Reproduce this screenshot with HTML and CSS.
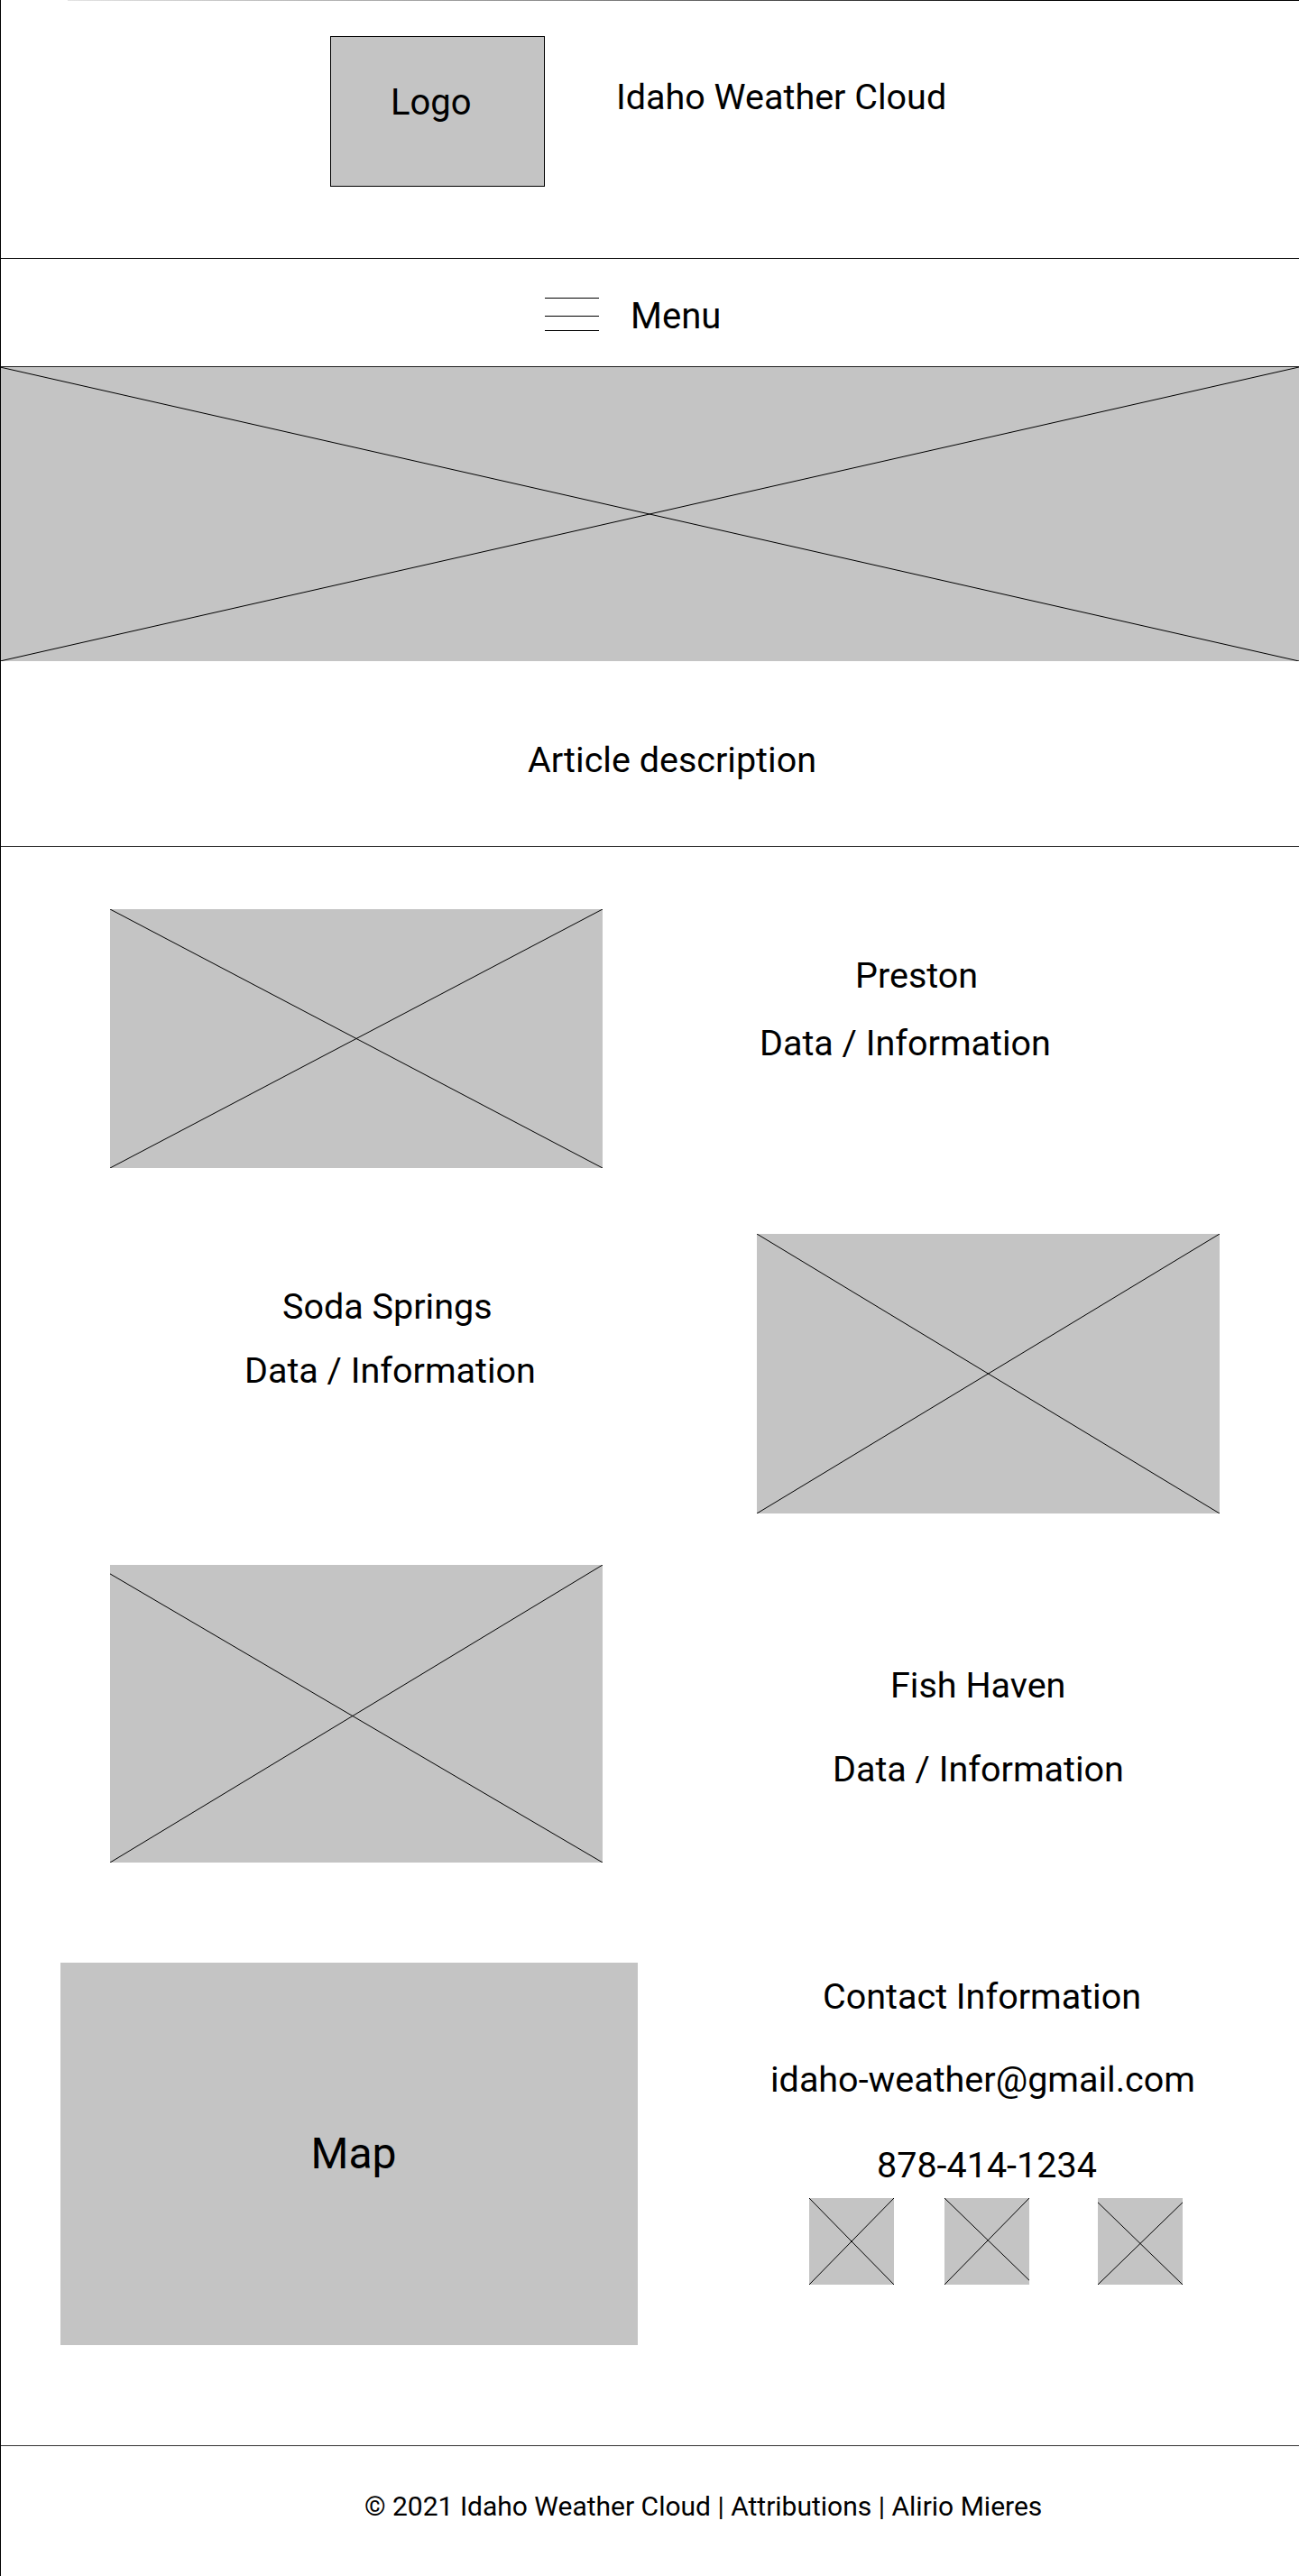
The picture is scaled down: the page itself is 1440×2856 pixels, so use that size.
FILE: index.html
```html
<!DOCTYPE html>
<html lang="en">
<head>
<meta charset="utf-8">
<title>Idaho Weather Cloud</title>
<link rel="stylesheet" href="styles.css">
</head>
<body>
<div class="page">
  <div class="topline"></div>
  <header class="site-header">
    <div class="logo"><span>Logo</span></div>
    <h1 class="site-title">Idaho Weather Cloud</h1>
  </header>

  <nav class="menu-bar">
    <svg class="burger" width="60" height="37" viewBox="0 0 60 37">
      <line x1="0" y1="0.5" x2="60" y2="0.5"/>
      <line x1="0" y1="20.5" x2="60" y2="20.5"/>
      <line x1="0" y1="36.5" x2="60" y2="36.5"/>
    </svg>
    <span class="menu-label">Menu</span>
  </nav>

  <div class="ph hero">
    <svg viewBox="0 0 100 100" preserveAspectRatio="none"><line x1="0" y1="0" x2="100" y2="100"/><line x1="0" y1="100" x2="100" y2="0"/></svg>
  </div>

  <section class="article">
    <p class="txt">Article description</p>
  </section>

  <main class="cities">
    <div class="row row-1">
      <div class="ph img-preston">
        <svg viewBox="0 0 100 100" preserveAspectRatio="none"><line x1="0" y1="0" x2="100" y2="100"/><line x1="0" y1="100" x2="100" y2="0"/></svg>
      </div>
      <div class="info info-1">
        <p class="txt name-preston">Preston</p>
        <p class="txt data-1">Data / Information</p>
      </div>
    </div>

    <div class="row row-2">
      <div class="info info-2">
        <p class="txt name-soda">Soda Springs</p>
        <p class="txt data-2">Data / Information</p>
      </div>
      <div class="ph img-soda">
        <svg viewBox="0 0 100 100" preserveAspectRatio="none"><line x1="0" y1="0" x2="100" y2="100"/><line x1="0" y1="100" x2="100" y2="0"/></svg>
      </div>
    </div>

    <div class="row row-3">
      <div class="ph img-fish">
        <svg viewBox="0 0 100 100" preserveAspectRatio="none"><line x1="0" y1="3" x2="100" y2="100"/><line x1="0" y1="100" x2="100" y2="0"/></svg>
      </div>
      <div class="info info-3">
        <p class="txt name-fish">Fish Haven</p>
        <p class="txt data-3">Data / Information</p>
      </div>
    </div>

    <div class="row row-4">
      <div class="map"><span>Map</span></div>
      <div class="info info-4">
        <p class="txt contact-title">Contact Information</p>
        <p class="txt contact-email">idaho-weather@gmail.com</p>
        <p class="txt contact-phone">878-414-1234</p>
        <div class="socials">
          <div class="ph social"><svg viewBox="0 0 100 100" preserveAspectRatio="none"><line x1="0" y1="0" x2="100" y2="100"/><line x1="0" y1="100" x2="100" y2="0"/></svg></div>
          <div class="ph social"><svg viewBox="0 0 100 100" preserveAspectRatio="none"><line x1="0" y1="0" x2="100" y2="95"/><line x1="0" y1="100" x2="100" y2="0"/></svg></div>
          <div class="ph social social-last"><svg viewBox="0 0 100 100" preserveAspectRatio="none"><line x1="0" y1="5" x2="100" y2="100"/><line x1="0" y1="100" x2="100" y2="5"/></svg></div>
        </div>
      </div>
    </div>
  </main>

  <footer class="site-footer">
    <p class="footer-text">© 2021 Idaho Weather Cloud | Attributions | Alirio Mieres</p>
  </footer>
</div>
</body>
</html>
```

FILE: styles.css
```css
* { box-sizing: border-box; }

html, body {
  margin: 0;
  padding: 0;
  background: #fff;
}

body {
  font-family: Roboto, "Liberation Sans", Arial, sans-serif;
  color: #000;
}

.page {
  width: 1440px;
  min-height: 2856px;
  border-left: 1px solid #000;
  overflow: hidden;
}

.topline {
  height: 1px;
  margin-left: 74px;
  background: linear-gradient(to right, #e2e2e2, #8a8a8a 40%, #000 80%);
}

.txt {
  margin: 0;
  font-size: 39.5px;
  line-height: 47px;
  font-weight: 400;
  white-space: nowrap;
}

/* header */
.site-header {
  display: flex;
  align-items: flex-start;
  height: 286px;
  border-bottom: 1px solid #000;
  padding-left: 365px;
}

.logo {
  width: 238px;
  height: 167px;
  margin-top: 39px;
  background: #c4c4c4;
  border: 1px solid #000;
  padding: 49px 0 0 66px;
  font-size: 40px;
  line-height: 47px;
}

.site-title {
  margin: 83px 0 0 79px;
  font-size: 39.5px;
  line-height: 47px;
  font-weight: 400;
  white-space: nowrap;
}

/* menu */
.menu-bar {
  display: flex;
  align-items: flex-start;
  height: 120px;
  border-bottom: 1px solid #222;
  padding-left: 603px;
}

.burger {
  display: block;
  margin-top: 43px;
}

.burger line {
  stroke: #000;
  stroke-width: 1;
}

.menu-label {
  margin: 40px 0 0 35px;
  font-size: 40px;
  line-height: 47px;
}

/* placeholders */
.ph {
  background: #c4c4c4;
  flex: none;
}

.ph svg {
  display: block;
  width: 100%;
  height: 100%;
}

.ph line {
  stroke: #000;
  stroke-width: 1;
  vector-effect: non-scaling-stroke;
}

.hero {
  width: 1440px;
  height: 326px;
  margin-left: -1px;
}

/* article */
.article {
  height: 206px;
  border-bottom: 1px solid #333;
  padding: 86px 0 0 584px;
}

/* cities */
.cities {
  padding: 69px 0 111px 0;
}

.row {
  display: flex;
  align-items: flex-start;
}

.info {
  flex: none;
}

.row-1 .img-preston {
  width: 546px;
  height: 287px;
  margin-left: 121px;
}

.info-1 {
  margin-left: 174px;
  padding-top: 50px;
}
.name-preston { margin-left: 106px; }
.data-1 { margin-top: 28px; }

.row-2 { margin-top: 73px; }
.info-2 {
  width: 568px;
  margin-left: 270px;
  padding-top: 57px;
}
.name-soda { margin-left: 42px; }
.data-2 { margin-top: 24px; }
.img-soda {
  width: 513px;
  height: 310px;
}

.row-3 { margin-top: 57px; }
.img-fish {
  width: 546px;
  height: 330px;
  margin-left: 121px;
}
.info-3 {
  margin-left: 255px;
  padding-top: 110px;
}
.name-fish { margin-left: 64px; }
.data-3 { margin-top: 46px; }

.row-4 { margin-top: 111px; }
.map {
  flex: none;
  width: 640px;
  height: 424px;
  margin-left: 66px;
  background: #c4c4c4;
  display: flex;
  align-items: center;
  justify-content: center;
  padding-left: 10px;
  font-size: 48px;
  line-height: 56px;
}

.info-4 {
  margin-left: 147px;
  padding-top: 14px;
}
.contact-title { margin-left: 58px; }
.contact-email { margin-top: 45px; }
.contact-phone { margin-top: 48px; margin-left: 118px; }

.socials {
  display: flex;
  margin: 13px 0 0 43px;
}

.social {
  width: 94px;
  height: 96px;
}

.social + .social { margin-left: 56px; }
.social-last.social { margin-left: 76px; }

/* footer */
.site-footer {
  height: 145px;
  border-top: 1px solid #333;
  padding: 49px 0 0 403px;
}

.footer-text {
  margin: 0;
  font-size: 30px;
  line-height: 35px;
  white-space: nowrap;
}
```
